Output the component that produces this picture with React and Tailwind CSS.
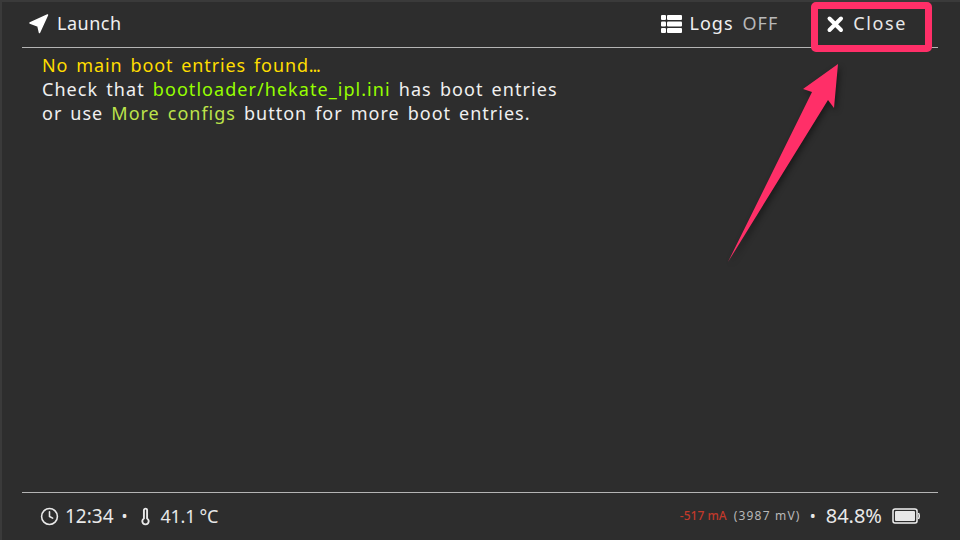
import { Clock, Thermometer } from 'lucide-react';

const font = "font-['Noto_Sans','Open_Sans',sans-serif]";

function ListIcon() {
  return (
    <svg width="21" height="18" viewBox="0 0 21 18" className="fill-white">
      <rect x="0" y="0" width="5" height="5" rx="1" />
      <rect x="6" y="0" width="15" height="5" rx="1" />
      <rect x="0" y="6.500" width="5" height="5" rx="1" />
      <rect x="6" y="6.500" width="15" height="5" rx="1" />
      <rect x="0" y="13" width="5" height="5" rx="1" />
      <rect x="6" y="13" width="15" height="5" rx="1" />
    </svg>
  );
}

function LaunchIcon() {
  return (
    <svg width="20" height="20" viewBox="0 0 20 20" className="fill-white stroke-white">
      <path d="M18.500 1 L1 9 L9 12 L10.500 18.500 Z" strokeWidth="1.500" strokeLinejoin="round" />
    </svg>
  );
}

function CloseIcon() {
  return (
    <svg width="18" height="18" viewBox="0 0 18 18" className="stroke-white">
      <path d="M3.500 3.500 L15 15 M15 3.500 L3.500 15" strokeWidth="4" strokeLinecap="round" />
    </svg>
  );
}

function BatteryIcon() {
  return (
    <svg width="28" height="16" viewBox="0 0 28 16">
      <rect x="1" y="1" width="24" height="14" rx="2" fill="none" stroke="#f2f2f2" strokeWidth="1.500" />
      <rect x="3" y="3" width="20" height="10" rx="1" fill="#e8e8e8" />
      <path d="M26.500 5 Q28 8 26.500 11" fill="none" stroke="#f2f2f2" strokeWidth="1.500" />
    </svg>
  );
}

export default function App() {
  return (
    <div className={`relative flex h-[540px] w-[960px] flex-col overflow-hidden border-t-2 border-l-2 border-[#3a3a3a] bg-[#2d2d2d] text-white ${font}`}>
      <header className="mr-[22px] ml-[20px] flex h-[46px] items-center justify-between border-b border-[#b4b4b4] pr-[31px] pl-[7px] pb-[2px]">
        <div className="flex items-center gap-[8px] text-[18px] tracking-[0.5px] text-[#f0f0f0]">
          <LaunchIcon />
          <span>Launch</span>
        </div>
        <div className="flex items-center gap-[48px] text-[18px] tracking-[1px]">
          <div className="flex items-center gap-[8px]">
            <ListIcon />
            <span className="text-[#f0f0f0]">Logs</span>
            <span className="ml-[1px] text-[#b8b8b8]">OFF</span>
          </div>
          <div className="flex items-center gap-[9px] tracking-[1.6px] text-[#e8e8e8]">
            <CloseIcon />
            <span>Close</span>
          </div>
        </div>
      </header>

      <main className="flex-1 px-[40px] pt-[5px] text-[18px] leading-[24px] tracking-[1.05px] [word-spacing:2.400px] text-[#f0f0f0]">
        <p className="tracking-[0.88px] text-[#ffdd00]">
          No main boot entries found<span className="tracking-[-1.200px]">...</span>
        </p>
        <p>
          Check that <span className="text-[#96ff00]">bootloader/hekate_ipl.ini</span> has boot entries
        </p>
        <p className="tracking-[0.99px]">
          or use <span className="text-[#bce34a]">More configs</span> button for more boot entries.
        </p>
      </main>

      <footer className="mr-[22px] ml-[20px] flex h-[48px] items-center justify-between border-t border-[#b4b4b4] pr-[18px] pl-[18px] pb-[1px]">
        <div className="flex items-center text-[19px] text-[#e8e8e8]">
          <Clock size={19} strokeWidth={2} />
          <span className="ml-[6px]">12:34</span>
          <span className="mx-[8px] text-[16px]">•</span>
          <Thermometer size={19} strokeWidth={2.400} />
          <span className="ml-[6px] text-[18px] tracking-[-0.3px]">41.1 °C</span>
        </div>
        <div className="flex items-center">
          <span className="text-[12px] font-medium text-[#c0392b]">-517 mA</span>
          <span className="ml-[7px] text-[12px] tracking-[1.2px] text-[#b8b8b8]">(3987 mV)</span>
          <span className="mr-[10px] ml-[9px] text-[16px] text-[#e8e8e8]">•</span>
          <span className="text-[20px] text-[#e8e8e8]">84.8%</span>
          <span className="ml-[10px]"><BatteryIcon /></span>
        </div>
      </footer>

      {/* annotation over the screenshot */}
      <div className="absolute left-[809px] top-[0px] h-[50px] w-[121px] rounded-[5px] border-[7px] border-[#ff2f68]" />
      <svg className="absolute left-[-2px] top-[-2px] drop-shadow-[2px_3px_3px_rgba(0,0,0,0.45)]" width="960" height="540">
        <polygon points="838,64 834,108 828,100 728,262 812,92 803,89" fill="#ff2f68" />
      </svg>
    </div>
  );
}
